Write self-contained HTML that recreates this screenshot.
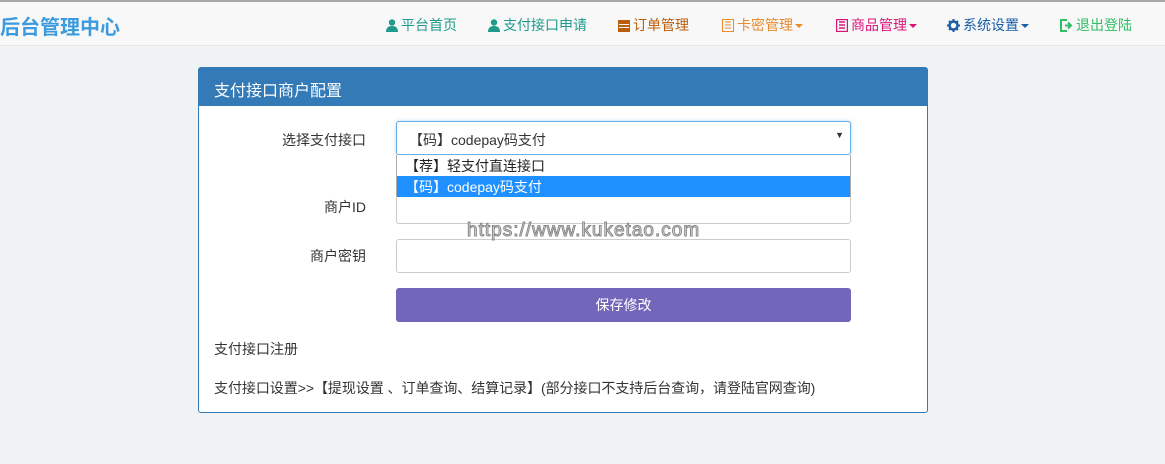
<!DOCTYPE html>
<html><head><meta charset="utf-8"><style>
*{margin:0;padding:0;box-sizing:border-box}
body{width:1165px;height:464px;background:#eff3f4;font-family:"Liberation Sans","Noto Sans CJK SC",sans-serif;font-size:14px;color:#333;position:relative;overflow:hidden}
.top{position:absolute;left:0;top:0;width:1165px;height:46px;background:#f8f8f8;border-top:2px solid #a8a8a8;border-bottom:1px solid #e7e7e7}
.brand{position:absolute;left:0;top:9px;font-size:20px;font-weight:bold;color:#3c9ade}
.nav{position:absolute;top:13px;font-size:14px;white-space:nowrap}
.car{display:inline-block;width:0;height:0;border-left:4px solid transparent;border-right:4px solid transparent;border-top:4px solid currentColor;vertical-align:middle;margin-left:2px}
.ico{display:inline-block;vertical-align:-2px;margin-right:3px}
.abs{position:absolute}
.panel{position:absolute;left:198px;top:67px;width:730px;height:346px;background:#fff;border:1px solid #337ab7;border-radius:3px}
.ph{height:38px;background:#337ab7;color:#fff;font-size:16px;padding:9px 15px}
.lbl{position:absolute;font-size:14px;color:#333;text-align:right;width:170px}
.inp{position:absolute;left:396px;width:455px;height:34px;border:1px solid #ccc;border-radius:3px;background:#fff}
</style></head><body>
<div class="top">
<div class="brand">后台管理中心</div>
<div class="nav" style="left:386px;color:#1f9a8b"><svg class="ico" width="12" height="13" viewBox="0 0 12 13"><circle cx="6" cy="3.5" r="3.2" fill="#1f9a8b"/><path d="M0 13 Q0 7 6 7 Q12 7 12 13Z" fill="#1f9a8b"/></svg>平台首页</div>
<div class="nav" style="left:488px;color:#1f9a8b"><svg class="ico" width="12" height="13" viewBox="0 0 12 13"><circle cx="6" cy="3.5" r="3.2" fill="#1f9a8b"/><path d="M0 13 Q0 7 6 7 Q12 7 12 13Z" fill="#1f9a8b"/></svg>支付接口申请</div>
<div class="nav" style="left:618px;color:#b85e0c"><svg class="ico" width="12" height="13" viewBox="0 0 12 13"><rect x="0" y="1" width="12" height="12" fill="#b85e0c"/><rect x="1" y="5" width="10" height="1" fill="#fff"/><rect x="1" y="8" width="10" height="1" fill="#fff"/></svg>订单管理</div>
<div class="nav" style="left:722px;color:#e98a2c"><svg class="ico" width="12" height="13" viewBox="0 0 12 13"><rect x="0.5" y="0.5" width="11" height="12" fill="none" stroke="#e98a2c"/><path d="M3 3h6M3 6h6M3 9h6" stroke="#e98a2c"/></svg>卡密管理<span class="car"></span></div>
<div class="nav" style="left:836px;color:#d9157a"><svg class="ico" width="12" height="13" viewBox="0 0 12 13"><rect x="0.5" y="0.5" width="11" height="12" fill="none" stroke="#d9157a" stroke-width="1.4"/><path d="M3 3h6M3 6h6M3 9h6" stroke="#d9157a" stroke-width="1.4"/></svg>商品管理<span class="car"></span></div>
<div class="nav" style="left:947px;color:#1a5fa8"><svg class="ico" width="13" height="13" viewBox="0 0 13 13"><circle cx="6.5" cy="6.5" r="4" fill="none" stroke="#1a5fa8" stroke-width="2.5"/><path d="M6.5 0v3M6.5 10v3M0 6.5h3M10 6.5h3M2 2l2 2M9 9l2 2M2 11l2-2M9 4l2-2" stroke="#1a5fa8" stroke-width="2"/></svg>系统设置<span class="car"></span></div>
<div class="nav" style="left:1060px;color:#2fbf66"><svg class="ico" width="13" height="13" viewBox="0 0 13 13"><path d="M7 1H1v11h6" fill="none" stroke="#2fbf66" stroke-width="2"/><path d="M5 6.5h5M8 3.5l3 3-3 3" fill="none" stroke="#2fbf66" stroke-width="2"/></svg>退出登陆</div>
</div>

<div class="panel"><div class="ph">支付接口商户配置</div></div>
<div class="lbl" style="left:196px;top:130px">选择支付接口</div>
<div class="lbl" style="left:196px;top:197px">商户ID</div>
<div class="lbl" style="left:196px;top:246px">商户密钥</div>
<div class="inp" style="top:121px;border-color:#66afe9;box-shadow:0 0 3px rgba(102,175,233,.5)"><span class="abs" style="left:12px;top:8px">【码】codepay码支付</span><span class="abs" style="right:6px;top:8px;font-size:9px">▼</span></div>
<div class="inp" style="top:190px"></div>
<div class="inp" style="top:239px"></div>
<div class="abs" style="left:396px;top:155px;width:455px;height:42px;background:#fff;border:1px solid #aaa;border-top:none">
<div style="height:21px;padding:1px 8px;color:#222">【荐】轻支付直连接口</div>
<div style="height:21px;padding:1px 8px;color:#fff;background:#1e90ff">【码】codepay码支付</div>
</div>
<div class="abs" style="left:467px;top:220px;font-size:19px;color:#e4e4e4;-webkit-text-stroke:1px #888;letter-spacing:1px">https://www.kuketao.com</div>
<div class="abs" style="left:396px;top:288px;width:455px;height:34px;background:#7266ba;border-radius:3px;color:#fff;text-align:center;line-height:34px">保存修改</div>
<div class="abs" style="left:214px;top:339px">支付接口注册</div>
<div class="abs" style="left:214px;top:378px;letter-spacing:-0.05px">支付接口设置&gt;&gt;【提现设置 、订单查询、结算记录】(部分接口不支持后台查询，请登陆官网查询)</div>
</body></html>
